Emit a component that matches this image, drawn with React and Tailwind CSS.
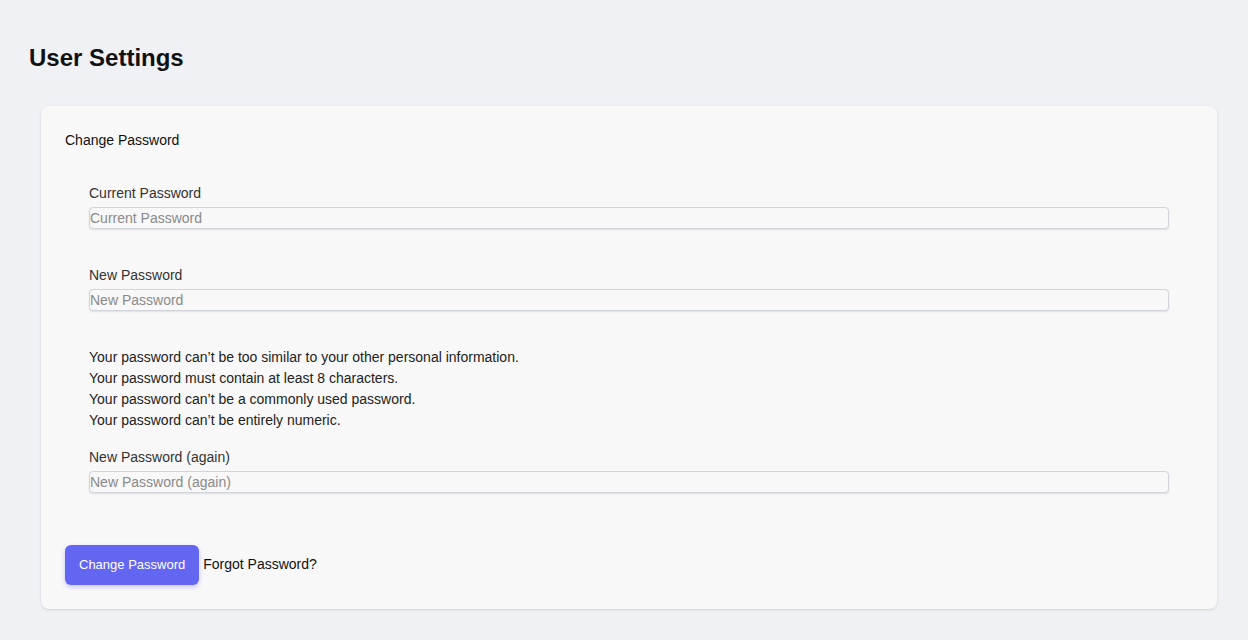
export default function App() {
    const hints = [
        'Your password can\u2019t be too similar to your other personal information.',
        'Your password must contain at least 8 characters.',
        'Your password can\u2019t be a commonly used password.',
        'Your password can\u2019t be entirely numeric.',
    ];

    const inputClass =
        'mt-1 block w-full h-[22px] px-0 text-[14px] bg-[#f8f8f8] border border-[#d1d5db] rounded-[4px] shadow-[0_1px_2px_rgba(0,0,0,0.1)] placeholder:text-[#8a8a8a] outline-none';

    return (
        <div
            className="min-h-[640px] bg-[#f0f1f5] pt-[42px] pb-[31px]"
            style={{ fontFamily: '"Liberation Sans", Arial, sans-serif' }}
        >
            <h1 className="pl-[29px] text-[24px] leading-[32px] font-bold text-[#111]">
                User Settings
            </h1>

            <div className="mt-[32px] ml-[41px] mr-[31px] bg-[#f8f8f8] rounded-lg shadow-[0_1px_3px_rgba(0,0,0,0.12)] p-6">
                <div className="text-[14px] leading-[20px] text-[#111]">Change Password</div>

                <div className="px-6 pt-[33px]">
                    <label className="block text-[14px] leading-[20px] text-[#333]">
                        Current Password
                    </label>
                    <input type="password" placeholder="Current Password" className={inputClass} />

                    <label className="block mt-[36px] text-[14px] leading-[20px] text-[#333]">
                        New Password
                    </label>
                    <input type="password" placeholder="New Password" className={inputClass} />

                    <ul className="mt-[36px] text-[14px] leading-[21px] text-[#222]">
                        {hints.map((hint) => (
                            <li key={hint}>{hint}</li>
                        ))}
                    </ul>

                    <label className="block mt-[16px] text-[14px] leading-[20px] text-[#333]">
                        New Password (again)
                    </label>
                    <input type="password" placeholder="New Password (again)" className={inputClass} />
                </div>

                <div className="mt-[52px] flex items-center gap-1">
                    <button className="h-10 px-[14px] bg-[#6366f1] text-white text-[13px] rounded-md shadow-[0_2px_4px_rgba(99,102,241,0.35)]">
                        Change Password
                    </button>
                    <span className="text-[14px] leading-[20px] pb-[2px] text-[#111]">Forgot Password?</span>
                </div>
            </div>
        </div>
    );
}
